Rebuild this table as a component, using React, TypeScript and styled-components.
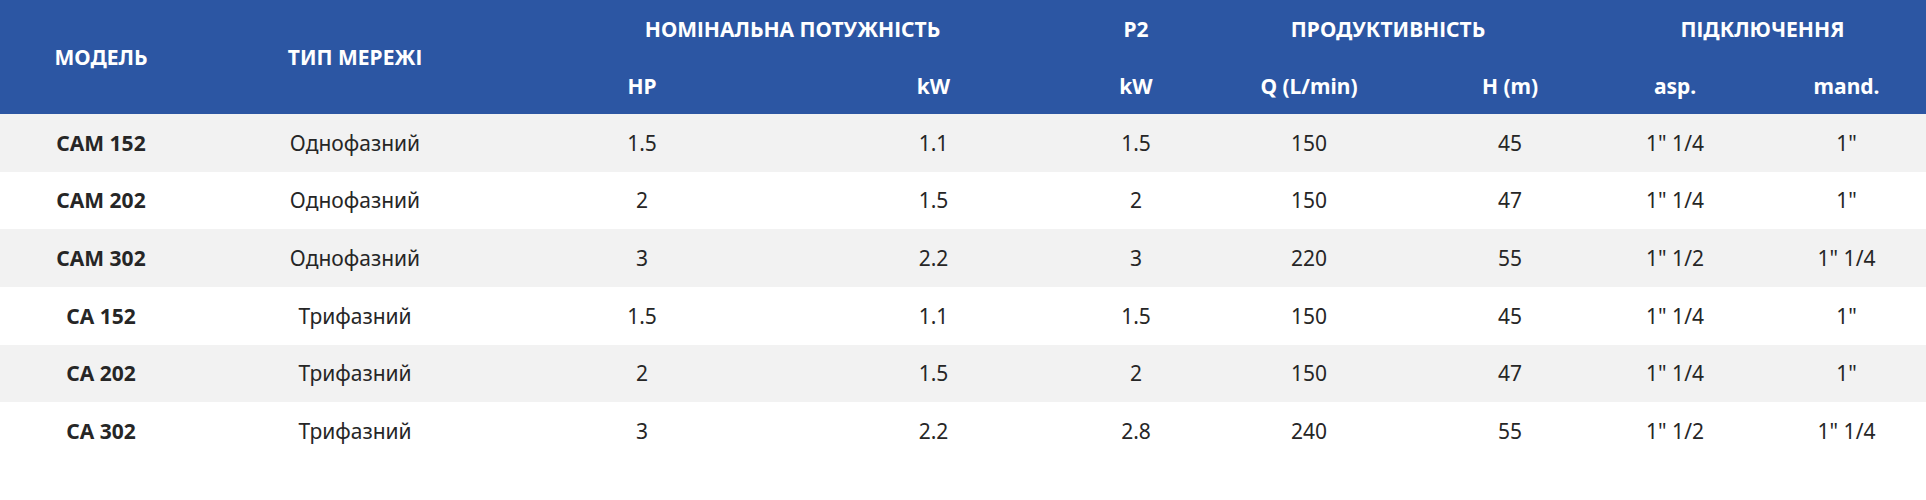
import React from "react";
import styled, { createGlobalStyle } from "styled-components";

const GlobalStyle = createGlobalStyle`
  html, body { margin: 0; padding: 0; background: #ffffff; }
  body { font-family: "Noto Sans", "Open Sans", sans-serif; }
`;

const Table = styled.table`
  width: 1926px;
  border-collapse: collapse;
  border-spacing: 0;
  table-layout: fixed;
  font-family: "Noto Sans", "Open Sans", sans-serif;
`;

const Head = styled.thead`
  background: #2c56a3;
`;

const HeadRow = styled.tr`
  height: 57px;
`;

const HeadCell = styled.th<{ $shift?: number }>`
  padding: 0 ${(p) => (p.$shift && p.$shift < 0 ? -p.$shift * 2 : 0)}px 0
    ${(p) => (p.$shift && p.$shift > 0 ? p.$shift * 2 : 0)}px;
  color: #ffffff;
  font-size: 21px;
  font-weight: 700;
  text-align: center;
  vertical-align: middle;
  white-space: nowrap;
`;

const BodyRow = styled.tr<{ $alt: boolean }>`
  height: 57.67px;
  background: ${(p) => (p.$alt ? "#f2f2f2" : "#ffffff")};
`;

const Cell = styled.td<{ $bold?: boolean }>`
  padding: 0;
  color: #262626;
  font-size: 21px;
  font-weight: ${(p) => (p.$bold ? 700 : 400)};
  text-align: center;
  vertical-align: middle;
  white-space: nowrap;
`;

const widths = [202, 306, 268, 315, 90, 256, 146, 184, 159];

type Row = [string, string, string, string, string, string, string, string, string];

const rows: Row[] = [
  ["CAM 152", "Однофазний", "1.5", "1.1", "1.5", "150", "45", "1\" 1/4", "1\""],
  ["CAM 202", "Однофазний", "2", "1.5", "2", "150", "47", "1\" 1/4", "1\""],
  ["CAM 302", "Однофазний", "3", "2.2", "3", "220", "55", "1\" 1/2", "1\" 1/4"],
  ["CA 152", "Трифазний", "1.5", "1.1", "1.5", "150", "45", "1\" 1/4", "1\""],
  ["CA 202", "Трифазний", "2", "1.5", "2", "150", "47", "1\" 1/4", "1\""],
  ["CA 302", "Трифазний", "3", "2.2", "2.8", "240", "55", "1\" 1/2", "1\" 1/4"],
];

export default function App() {
  return (
    <>
      <GlobalStyle />
      <Table>
        <colgroup>
          {widths.map((w, i) => (
            <col key={i} style={{ width: w }} />
          ))}
        </colgroup>
        <Head>
          <HeadRow>
            <HeadCell rowSpan={2}>МОДЕЛЬ</HeadCell>
            <HeadCell rowSpan={2}>ТИП МЕРЕЖІ</HeadCell>
            <HeadCell colSpan={2} $shift={-7}>НОМІНАЛЬНА ПОТУЖНІСТЬ</HeadCell>
            <HeadCell>P2</HeadCell>
            <HeadCell colSpan={2} $shift={6}>ПРОДУКТИВНІСТЬ</HeadCell>
            <HeadCell colSpan={2} $shift={8}>ПІДКЛЮЧЕННЯ</HeadCell>
          </HeadRow>
          <HeadRow>
            <HeadCell>HP</HeadCell>
            <HeadCell>kW</HeadCell>
            <HeadCell>kW</HeadCell>
            <HeadCell>Q (L/min)</HeadCell>
            <HeadCell>H (m)</HeadCell>
            <HeadCell>asp.</HeadCell>
            <HeadCell>mand.</HeadCell>
          </HeadRow>
        </Head>
        <tbody>
          {rows.map((r, i) => (
            <BodyRow key={r[0]} $alt={i % 2 === 0}>
              {r.map((v, j) => (
                <Cell key={j} $bold={j === 0}>
                  {v}
                </Cell>
              ))}
            </BodyRow>
          ))}
        </tbody>
      </Table>
    </>
  );
}
